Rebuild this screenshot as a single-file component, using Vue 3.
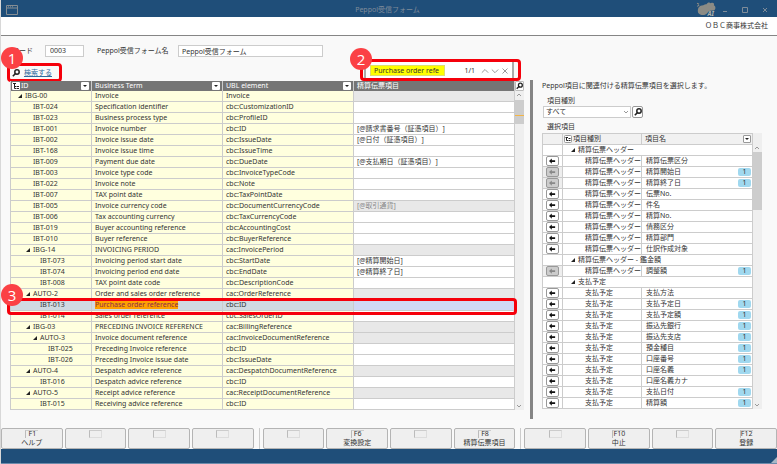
<script setup>
import { ref } from 'vue'

const code = ref('0003')
const formName = ref('Peppol受信フォーム')
const query = ref('Purchase order refe')
const kind = ref('すべて')

// id, business term, UBL element, linked item, indent level, state
const terms = [
  ['IBG-00', 'Invoice', 'Invoice', '', 0, 'group'],
  ['IBT-024', 'Specification identifier', 'cbc:CustomizationID', '', 1],
  ['IBT-023', 'Business process type', 'cbc:ProfileID', '', 1],
  ['IBT-001', 'Invoice number', 'cbc:ID', '[@請求書番号（証憑項目）]', 1],
  ['IBT-002', 'Invoice issue date', 'cbc:IssueDate', '[@日付（証憑項目）]', 1],
  ['IBT-168', 'Invoice issue time', 'cbc:IssueTime', '', 1],
  ['IBT-009', 'Payment due date', 'cbc:DueDate', '[@支払期日（証憑項目）]', 1],
  ['IBT-003', 'Invoice type code', 'cbc:InvoiceTypeCode', '', 1],
  ['IBT-022', 'Invoice note', 'cbc:Note', '', 1],
  ['IBT-007', 'TAX point date', 'cbc:TaxPointDate', '', 1],
  ['IBT-005', 'Invoice currency code', 'cbc:DocumentCurrencyCode', '[@取引通貨]', 1, 'locked'],
  ['IBT-006', 'Tax accounting currency', 'cbc:TaxCurrencyCode', '', 1],
  ['IBT-019', 'Buyer accounting reference', 'cbc:AccountingCost', '', 1],
  ['IBT-010', 'Buyer reference', 'cbc:BuyerReference', '', 1],
  ['IBG-14', 'INVOICING PERIOD', 'cac:InvoicePeriod', '', 1, 'group'],
  ['IBT-073', 'Invoicing period start date', 'cbc:StartDate', '[@精算開始日]', 2],
  ['IBT-074', 'Invoicing period end date', 'cbc:EndDate', '[@精算終了日]', 2],
  ['IBT-008', 'TAX point date code', 'cbc:DescriptionCode', '', 2],
  ['AUTO-2', 'Order and sales order reference', 'cac:OrderReference', '', 1, 'group'],
  ['IBT-013', 'Purchase order reference', 'cbc:ID', '', 2, 'hit'],
  ['IBT-014', 'Sales order reference', 'cbc:SalesOrderID', '', 2],
  ['IBG-03', 'PRECEDING INVOICE REFERENCE', 'cac:BillingReference', '', 1, 'group'],
  ['AUTO-3', 'Invoice document reference', 'cac:InvoiceDocumentReference', '', 2, 'group'],
  ['IBT-025', 'Preceding Invoice reference', 'cbc:ID', '', 3],
  ['IBT-026', 'Preceding Invoice issue date', 'cbc:IssueDate', '', 3],
  ['AUTO-4', 'Despatch advice reference', 'cac:DespatchDocumentReference', '', 1, 'group'],
  ['IBT-016', 'Despatch advice reference', 'cbc:ID', '', 2],
  ['AUTO-5', 'Receipt advice reference', 'cac:ReceiptDocumentReference', '', 1, 'group'],
  ['IBT-015', 'Receiving advice reference', 'cbc:ID', '', 2],
].map(([id, term, ubl, item, level, state = '']) => ({ id, term, ubl, item, level, state }))

const H = '精算伝票ヘッダー'
const P = '支払予定'
// category, name (empty for a heading), use count, button disabled
const items = [
  [H],
  [H, '精算伝票区分', 0],
  [H, '精算開始日', 1, true],
  [H, '精算終了日', 1, true],
  [H, '伝票No.', 0],
  [H, '件名', 0],
  [H, '精算No.', 0],
  [H, '債務区分', 0],
  [H, '精算部門', 0],
  [H, '仕訳作成対象', 0],
  [H + ' - 鑑金額'],
  [H, '調整額', 1, true],
  [P],
  [P, '支払方法', 0],
  [P, '支払予定日', 1],
  [P, '支払予定額', 1],
  [P, '振込先銀行', 1],
  [P, '振込先支店', 1],
  [P, '預金種目', 1],
  [P, '口座番号', 1],
  [P, '口座名義', 1],
  [P, '口座名義カナ', 0],
  [P, '支払日付', 1],
  [P, '精算額', 1],
].map(([cat, name = '', used = 0, off = false]) => ({ cat, name, used, off }))

const keyGroups = [
  [['F1', 'ヘルプ'], ['', ''], ['', ''], ['', '']],
  [['', ''], ['F6', '変換設定'], ['', ''], ['F8', '精算伝票項目']],
  [['', ''], ['F10', '中止'], ['', ''], ['F12', '登録']],
]
</script>

<template>
  <div class="window">
    <header class="titlebar">
      <svg class="app-icon" viewBox="0 0 12 10" aria-hidden="true">
        <path d="M.5.5h11v9H.5zM.5 3h11M2 1.8h1M4 1.8h1M6 1.8h1" />
      </svg>
      <h1>Peppol受信フォーム</h1>
      <div class="window-tools">
        <svg class="mascot" viewBox="0 0 20 14" aria-hidden="true">
          <path d="M1 1l2 1M1 4l2-1" stroke="#8b8b85" />
          <path d="M2 10c-1-4 1-7 5-7 1-1 2-1 3-1 1-2 3-2 4-1 2-1 4 0 3 2 2 1 2 4 0 5-2 0-5 0-6 2-2 3-7 3-9 0z" fill="#8b8b85" />
          <text x="11" y="13">AI</text>
        </svg>
        <button type="button" aria-label="最小化"><svg viewBox="0 0 8 8"><path d="M2 5.500h4" /></svg></button>
        <button type="button" aria-label="最大化"><svg viewBox="0 0 8 8"><path d="M1.500 1.500h5v5h-5z" /></svg></button>
        <button type="button" aria-label="閉じる"><svg viewBox="0 0 8 8"><path d="M2 2l4 4M6 2L2 6" /></svg></button>
      </div>
    </header>
    <div class="company">ＯＢＣ商事株式会社</div>

    <main>
      <form class="fields" @submit.prevent>
        <label for="code" class="code-label">コード</label>
        <input id="code" v-model="code" class="code" />
        <label for="form-name" class="name-label">Peppol受信フォーム名</label>
        <input id="form-name" v-model="formName" class="name" />
      </form>

      <div class="panes">
        <section class="left">
          <div class="tools">
            <div class="find-link">
              <svg class="glass" viewBox="0 0 8 8" aria-hidden="true"><circle cx="5" cy="3" r="2.200" /><path d="M3.400 4.600L.8 7.200" /></svg>
              <a href="#find">検索する</a>
              <span class="mark mark-link"><b>1</b></span>
            </div>
            <div class="find-bar" role="search">
              <input v-model="query" aria-label="検索" />
              <output>1/1</output>
              <button type="button" aria-label="前へ"><svg viewBox="0 0 8 8"><path d="M.8 5.700L4 2.500l3.200 3.200" /></svg></button>
              <button type="button" aria-label="次へ"><svg viewBox="0 0 8 8"><path d="M.8 2.500L4 5.700l3.200-3.200" /></svg></button>
              <button type="button" aria-label="検索を閉じる"><svg viewBox="0 0 8 8"><path d="M1.500 1.500l5 5M6.500 1.500l-5 5" /></svg></button>
              <span class="mark mark-bar"><b>2</b></span>
            </div>
          </div>

          <div class="grid-wrap">
            <table class="terms">
              <colgroup><col class="c-id" /><col class="c-term" /><col class="c-ubl" /><col /></colgroup>
              <thead>
                <tr>
                  <th>
                    <div class="th">
                      <svg class="tree" viewBox="0 0 8 8" aria-hidden="true"><rect width="8" height="8" rx="1" fill="#fff" stroke="none" /><path d="M1 1.500h3M2.500 1.500v5h1.500M2.500 4.500h1.500M4.500 4.500h2.500M4.500 6.500h2.500" /></svg>
                      <span>ID</span>
                      <button type="button" class="drop" aria-label="IDの絞り込み"></button>
                    </div>
                  </th>
                  <th><div class="th pad"><span>Business Term</span><button type="button" class="drop" aria-label="Business Termの絞り込み"></button></div></th>
                  <th><div class="th pad"><span>UBL element</span><button type="button" class="drop" aria-label="UBL elementの絞り込み"></button></div></th>
                  <th><div class="th pad"><span>精算伝票項目</span></div></th>
                </tr>
              </thead>
              <tbody>
                <tr v-for="t in terms" :key="t.id" :class="t.state">
                  <td :class="'lv' + t.level"><i v-if="t.state === 'group'" class="tri"></i><span>{{ t.id }}</span></td>
                  <td><mark v-if="t.state === 'hit'">{{ t.term }}</mark><template v-else>{{ t.term }}</template></td>
                  <td>{{ t.ubl }}</td>
                  <td class="item">{{ t.item }}</td>
                </tr>
              </tbody>
            </table>
            <div class="scroll">
              <button type="button" class="corner" aria-label="表を検索">
                <svg class="glass" viewBox="0 0 8 8"><circle cx="5" cy="3" r="2.200" /><path d="M3.400 4.600L.8 7.200" /></svg>
              </button>
              <svg class="chev" viewBox="0 0 8 8" aria-hidden="true"><path d="M2 5l2-2 2 2" /></svg>
              <div class="thumb"><i></i></div>
              <svg class="chev end" viewBox="0 0 8 8" aria-hidden="true"><path d="M2 3l2 2 2-2" /></svg>
            </div>
            <span class="mark mark-row"><b>3</b></span>
          </div>
        </section>

        <section class="right">
          <p>Peppol項目に関連付ける精算伝票項目を選択します。</p>
          <label for="kind">項目種別</label>
          <div class="kind-row">
            <div class="select">
              <select id="kind" v-model="kind"><option>すべて</option></select>
              <svg class="chev" viewBox="0 0 8 8" aria-hidden="true"><path d="M2 3l2 2 2-2" /></svg>
            </div>
            <button type="button" class="kind-find" aria-label="項目種別を検索">
              <svg class="glass" viewBox="0 0 8 8"><circle cx="5" cy="3" r="2.200" /><path d="M3.400 4.600L.8 7.200" /></svg>
            </button>
          </div>
          <h2>選択項目</h2>
          <div class="picker">
            <table class="items">
              <colgroup><col class="c-btn" /><col class="c-cat" /><col /></colgroup>
              <thead>
                <tr>
                  <th></th>
                  <th>
                    <div class="th">
                      <svg class="tree" viewBox="0 0 8 8" aria-hidden="true"><rect x=".5" y=".5" width="7" height="7" rx="1" fill="#fff" stroke="#999" /><path d="M1.500 2.500h2.500M2.500 2.500v3h1.500M4.500 3.500h2M4.500 5.500h2" /></svg>
                      <span>項目種別</span>
                    </div>
                  </th>
                  <th><div class="th pad"><span>項目名</span><button type="button" class="drop" aria-label="項目名の絞り込み"></button></div></th>
                </tr>
              </thead>
              <tbody>
                <tr v-for="(r, i) in items" :key="i">
                  <template v-if="r.name">
                    <td :class="{ off: r.off }">
                      <button type="button" class="assign" :disabled="r.off" :aria-label="r.name + 'を設定'">
                        <svg viewBox="0 0 8 6"><path d="M0 3l3.200-3v2H7v2H3.200v2z" /></svg>
                      </button>
                    </td>
                    <td class="cat">{{ r.cat }}</td>
                    <td><div class="name-cell"><span>{{ r.name }}</span><em v-if="r.used">{{ r.used }}</em></div></td>
                  </template>
                  <template v-else>
                    <td></td>
                    <td colspan="2" class="heading"><i class="tri"></i><span>{{ r.cat }}</span></td>
                  </template>
                </tr>
              </tbody>
            </table>
            <div class="scroll">
              <svg class="chev" viewBox="0 0 8 8" aria-hidden="true"><path d="M2 5l2-2 2 2" /></svg>
              <div class="thumb"></div>
              <svg class="chev end" viewBox="0 0 8 8" aria-hidden="true"><path d="M2 3l2 2 2-2" /></svg>
            </div>
          </div>
        </section>
      </div>
    </main>

    <nav class="keys" aria-label="ファンクションキー">
      <div v-for="(g, gi) in keyGroups" :key="gi" class="key-group">
        <button v-for="(k, ki) in g" :key="ki" type="button" :disabled="!k[0]" :aria-label="k[0] ? undefined : '未割り当て'">
          <kbd>{{ k[0] }}</kbd>
          <span>{{ k[1] }}</span>
        </button>
      </div>
    </nav>
    <footer><svg viewBox="0 0 6 6" aria-hidden="true"><path d="M6 0v6H0z" /></svg></footer>
  </div>
</template>

<style>
body {
  margin: 0;
  background: #f9f9f9;
}
</style>

<style scoped>
* {
  box-sizing: border-box;
}
.window {
  min-height: 100vh;
  display: flex;
  flex-direction: column;
  border-left: 1px solid #d8d8d8;
  background: #f9f9f9;
  color: #333;
  font: 7px/10px "Noto Sans", "Noto Sans CJK JP", sans-serif;
  text-spacing-trim: space-all;
}
button,
input,
select,
kbd {
  font: inherit;
  color: inherit;
  margin: 0;
  padding: 0;
}
button {
  border: 0;
  background: none;
}
svg {
  display: block;
  fill: none;
  stroke: #999;
}
table {
  border-collapse: separate;
  border-spacing: 0;
  table-layout: fixed;
}
th,
td {
  padding: 0;
  height: 11px;
  line-height: 10px;
  white-space: nowrap;
  text-align: left;
  font-weight: 400;
}

.titlebar {
  display: grid;
  grid-template-columns: 1fr auto 1fr;
  align-items: center;
  height: 17px;
  padding: 0 8px 0 5px;
  background: #1f4e79;
}
.app-icon {
  width: 12px;
  height: 10px;
  margin-top: 3px;
  stroke: #858d93;
}
h1 {
  margin: 2px 0 0;
  font-size: 7px;
  font-weight: 400;
  color: #7f8c99;
}
.window-tools {
  display: flex;
  align-items: center;
  justify-content: flex-end;
  gap: 12px;
  padding-top: 2px;
}
.window-tools button svg {
  width: 8px;
  height: 8px;
  stroke: #7f8c99;
}
.mascot {
  width: 21px;
  height: 15px;
  margin-right: -8px;
  stroke: none;
}
.mascot text {
  font-size: 6px;
  font-weight: 700;
  font-style: italic;
  fill: #b4b4ae;
}
.company {
  height: 19px;
  padding: 4px 9px 0 0;
  text-align: right;
  background: #fff;
  border-bottom: 1px solid #858585;
}

main {
  flex: 1;
  padding: 9px 0 0 9px;
}
.fields {
  display: flex;
  align-items: center;
  height: 12px;
}
.fields input {
  height: 12px;
  padding: 0 4px 1px;
  border: 1px solid #ccc;
  background: #fff;
}
.code-label {
  width: 35px;
  padding-left: 2px;
}
.fields .code {
  width: 39px;
}
.name-label {
  width: 94px;
  padding-left: 13px;
}
.fields .name {
  width: 145px;
  padding: 0 3px 1px;
}

.panes {
  display: flex;
}
.left {
  flex: 1;
  min-width: 0;
  padding-right: 6px;
}
.tools {
  display: flex;
  justify-content: space-between;
  height: 24px;
  padding: 5px 10px 0 2px;
}
.find-link {
  position: relative;
  display: flex;
  gap: 4px;
  height: 19px;
  align-items: center;
  padding: 3px 2px 0 0;
}
.find-link a {
  color: #2f6b9f;
}
.glass {
  width: 8px;
  height: 8px;
  stroke: #222;
  stroke-width: 1.5;
}
.find-bar {
  position: relative;
  display: flex;
  align-items: center;
  width: 150px;
  height: 17px;
  padding: 0 3px 0 4px;
  border-left: 2px solid #aaa;
  border-right: 2px solid #aaa;
  background: #fff;
}
.find-bar input {
  width: 75px;
  height: 11px;
  padding: 0 3px;
  border: 1px solid #dede70;
  background: #ff0;
}
.find-bar output {
  flex: 1;
  text-align: right;
  padding-right: 4px;
}
.find-bar button {
  margin-left: 2px;
}
.find-bar button svg {
  width: 8px;
  height: 8px;
}

.mark {
  position: absolute;
  border: 3px solid #f5000b;
  border-radius: 4px;
  pointer-events: none;
}
.mark b {
  position: absolute;
  left: -9px;
  width: 22px;
  height: 22px;
  border-radius: 50%;
  background: #fb4145;
  color: #fff;
  font: 15px/22px "Open Sans", sans-serif;
  text-align: center;
}
.mark-link {
  inset: 1px -8px -1px -5px;
}
.mark-link b {
  top: -19px;
}
.mark-bar {
  inset: -3px -9px -2px -6px;
}
.mark-bar b {
  top: -14px;
  left: -13px;
}
.mark-row {
  top: 217px;
  right: 7px;
  left: -3px;
  height: 17px;
}
.mark-row b {
  top: -17px;
}

.grid-wrap {
  position: relative;
  display: flex;
}
.terms {
  flex: 1;
  width: 100%;
  border-left: 1px solid #ccc;
}
.c-id {
  width: 81px;
}
.c-term {
  width: 131px;
}
.c-ubl {
  width: 131px;
}
.terms th {
  height: 10px;
  background: #757575;
  color: #fff;
  border-right: 1px solid #ccc;
}
.th {
  display: flex;
  align-items: center;
  gap: 1px;
  height: 10px;
}
.th.pad {
  padding-left: 3px;
}
.tree {
  width: 8px;
  height: 8px;
  margin-left: 1px;
  stroke: #222;
}
.drop {
  display: flex;
  align-items: center;
  justify-content: center;
  width: 8px;
  height: 8px;
  margin: 0 2px 0 auto;
  border-radius: 1px;
  background: #fff;
}
.drop::after {
  content: "";
  border: 2px solid transparent;
  border-top-color: #222;
  border-bottom: 0;
}
.terms td {
  padding-left: 3px;
  background: #ffffde;
  border-right: 1px solid #ccc;
  border-bottom: 1px solid #ccc;
}
.terms td.item {
  background: #fff;
}
.terms .group .item,
.terms .locked .item {
  background: #e8e8e8;
}
.terms .locked .item {
  color: #888;
}
.terms .hit td {
  background: #d0dae2;
}
.terms .hit .item {
  background: #d0d8f6;
}
.terms .lv0 {
  padding-left: 14px;
}
.terms .lv1 {
  padding-left: 22px;
}
.terms .lv2 {
  padding-left: 29px;
}
.terms .lv3 {
  padding-left: 37px;
}
mark {
  background: #ffa200;
  color: #8c2a4a;
}
.tri {
  display: inline-block;
  width: 4px;
  height: 4px;
  margin: 0 3px 0 -7px;
  background: #222;
  clip-path: polygon(100% 0, 100% 100%, 0 100%);
}

.scroll {
  display: flex;
  flex-direction: column;
  width: 9px;
  background: #efefef;
}
.chev {
  width: 8px;
  height: 8px;
}
.corner {
  display: flex;
  width: 9px;
  height: 10px;
  align-items: center;
  border: 1px solid #bbb;
  border-radius: 1px;
  background: #fff;
}
.grid-wrap .thumb {
  height: 24px;
  margin-top: 1px;
  padding-top: 15px;
  background: #cdcdcd;
}
.thumb i {
  display: block;
  height: 1px;
  background: #f5b544;
}
.chev.end {
  margin-top: auto;
}

.right {
  width: 247px;
  margin-top: 23px;
  padding: 1px 15px 10px 9px;
  border-left: 3px solid #858585;
}
.right p {
  margin: 0 0 5px;
}
.right label {
  display: block;
  padding-left: 5px;
}
.kind-row {
  display: flex;
  gap: 1px;
  padding-left: 1px;
  height: 12px;
}
.select {
  display: flex;
  align-items: center;
  width: 88px;
  border: 1px solid #ccc;
  background: #fff;
}
.select select {
  flex: 1;
  height: 10px;
  padding-left: 2px;
  border: 0;
  appearance: none;
  background: none;
}
.kind-find {
  display: flex;
  align-items: center;
  justify-content: center;
  width: 11px;
  border: 1px solid #999;
  border-radius: 2px;
  background: #fff;
}
h2 {
  margin: 4px 0 0;
  padding-left: 5px;
  font-size: 7px;
  font-weight: 400;
}
.picker {
  display: flex;
  margin-top: 1px;
}
.items {
  flex: 1;
  border-left: 1px solid #ccc;
  border-top: 1px solid #ccc;
}
.c-btn {
  width: 20px;
}
.c-cat {
  width: 79px;
}
.items th {
  height: 10px;
  background: #f1f1f1;
}
.items th,
.items td {
  border-right: 1px solid #ccc;
  border-bottom: 1px solid #ccc;
}
.items td {
  background: #fff;
}
.items .drop {
  margin-right: 1px;
  border: 1px solid #999;
}
.items td.off {
  background: #eee;
}
.items .cat {
  padding-left: 22px;
}
.items .heading {
  padding-left: 15px;
}
.assign {
  display: flex;
  align-items: center;
  justify-content: center;
  width: 13px;
  height: 10px;
  margin-left: 3px;
  border: 1px solid #999;
  border-radius: 2px;
  background: #fff;
}
.assign svg {
  width: 7px;
  height: 6px;
  stroke: none;
  fill: #111;
}
.assign:disabled {
  background: #ccc;
}
.assign:disabled svg {
  fill: #888;
}
.name-cell {
  display: flex;
  align-items: center;
  justify-content: space-between;
  padding: 0 1px 0 4px;
}
.name-cell em {
  width: 13px;
  height: 8px;
  line-height: 8px;
  border-radius: 2px;
  background: #a0d8ef;
  text-align: center;
  font-style: normal;
}
.picker .scroll {
  padding-top: 11px;
}
.picker .thumb {
  height: 58px;
  background: #cdcdcd;
}

.keys {
  display: flex;
  gap: 5px;
  height: 21px;
}
.key-group {
  flex: 1;
  display: flex;
  gap: 2px;
}
.key-group + .key-group {
  padding-left: 3px;
  border-left: 1px solid #ccc;
}
.keys button {
  flex: 1;
  display: flex;
  flex-direction: column;
  align-items: center;
  border: 1px solid #b4b4b4;
  border-radius: 2px;
  background: #efefef;
  line-height: 9px;
}
.keys kbd {
  min-width: 13px;
  height: 8px;
  margin-top: 1px;
  line-height: 6px;
  border-top: 1px solid #ccc;
  border-left: 1px solid #bbb;
  text-align: center;
}
.keys button:disabled kbd {
  border-bottom: 1px solid #ddd;
  border-right: 1px solid #ddd;
}
footer {
  display: flex;
  justify-content: flex-end;
  align-items: flex-end;
  height: 15px;
  background: #1f4e79;
  border-bottom: 1px solid #6c8bab;
}
footer svg {
  width: 6px;
  height: 6px;
  stroke: none;
  fill: #a9b8c6;
}
</style>
